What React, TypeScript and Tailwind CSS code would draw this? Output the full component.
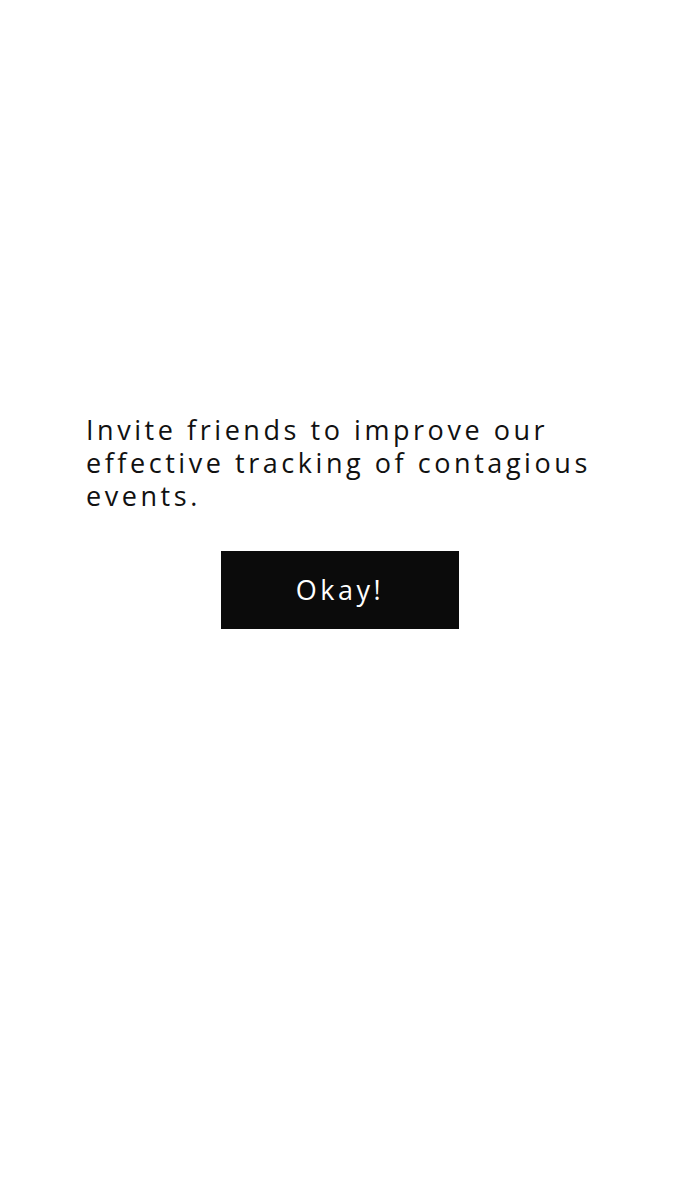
export default function App() {
  return (
    <div className="w-[700px] h-[1200px] bg-white pt-[413px]">
      <div className="ml-[86px] w-[540px] flex flex-col">
        <p className="text-[27px] leading-[33px] tracking-[3.55px] text-[#111] font-['Open_Sans',sans-serif] font-normal">
          Invite friends to improve our effective tracking of contagious events.
        </p>
        <button className="mt-[39px] ml-[135px] w-[238px] h-[78px] bg-[#0b0b0b] text-white text-[27px] tracking-[3.5px] font-['Open_Sans',sans-serif]">
          Okay!
        </button>
      </div>
    </div>
  );
}
